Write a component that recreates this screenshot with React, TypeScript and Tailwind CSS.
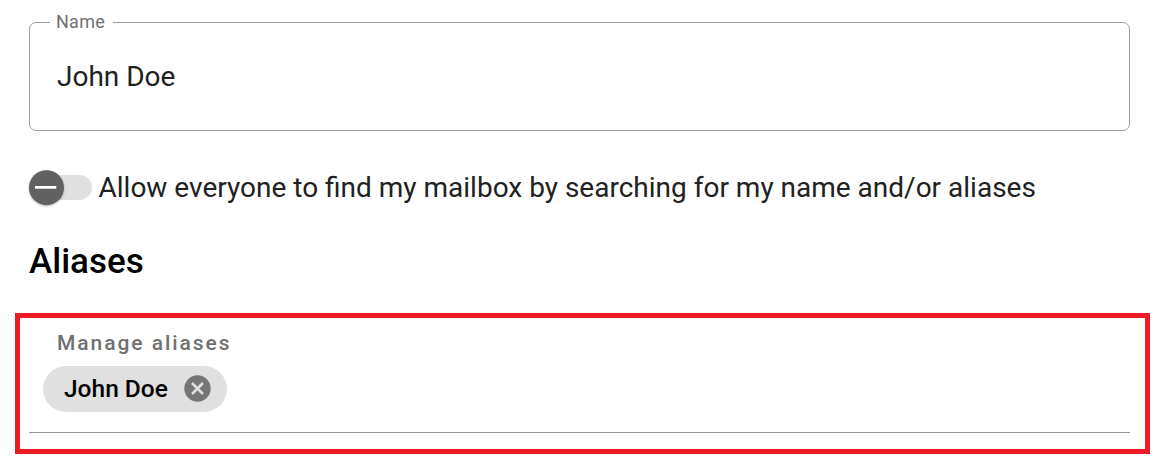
export default function App() {
  return (
    <main className="flex h-[476px] w-[1165px] flex-col overflow-hidden bg-white pt-[22px] font-['Roboto',sans-serif] text-[#212121]">
      <div className="relative ml-[29px] flex h-[109px] w-[1101px] items-center rounded-[7px] border border-[#9e9e9e] pl-[27px]">
        <span className="absolute -top-[13px] left-[20px] bg-white pr-[8px] pl-[6px] text-[18px] leading-[24px] tracking-[0.28px] text-[#707070]">Name</span>
        <span className="text-[28px] leading-[36px]">John Doe</span>
      </div>
      <div className="mt-[39px] ml-[29px] flex h-[36px] items-center">
        <svg className="overflow-visible" width="63" height="36" viewBox="0 0 63 36">
          <rect x="0" y="5" width="63" height="25" rx="12.5" fill="#e0e0e0" />
          <circle className="drop-shadow-[0_1px_1px_rgba(0,0,0,0.25)]" cx="17.5" cy="17.7" r="17.5" fill="#616161" />
          <rect x="6" y="16" width="21.3" height="2.7" fill="#fff" />
        </svg>
        <span className="ml-[6.5px] text-[28px] leading-[36px] whitespace-nowrap">Allow everyone to find my mailbox by searching for my name and/or aliases</span>
      </div>
      <h2 className="mt-[34px] ml-[29px] text-[35px] leading-[44px] font-medium text-black">Aliases</h2>
      <section className="mt-[29px] ml-[15px] h-[141px] w-[1135px] border-[5px] border-[#ed1c24] pl-[9px]">
        <div className="h-[115px] w-[1101px] border-b border-[#949494]">
          <div className="pt-[13px] pl-[28px] text-[21px] leading-[24px] font-medium tracking-[1.95px] text-[#707070]">Manage aliases</div>
          <div className="mt-[11px] ml-[14px] flex h-[46px] w-[184px] items-center rounded-full bg-[#e0e0e0] pl-[21px] text-black">
            <span className="text-[24.5px] font-medium">John Doe</span>
            <svg className="mb-[2px] ml-[16px]" width="27" height="27" viewBox="0 0 27 27">
              <circle cx="13.5" cy="13.5" r="13.2" fill="#757575" />
              <path d="M8 8L19 19M19 8L8 19" stroke="#e0e0e0" strokeWidth="2.6" />
            </svg>
          </div>
        </div>
      </section>
    </main>
  );
}
